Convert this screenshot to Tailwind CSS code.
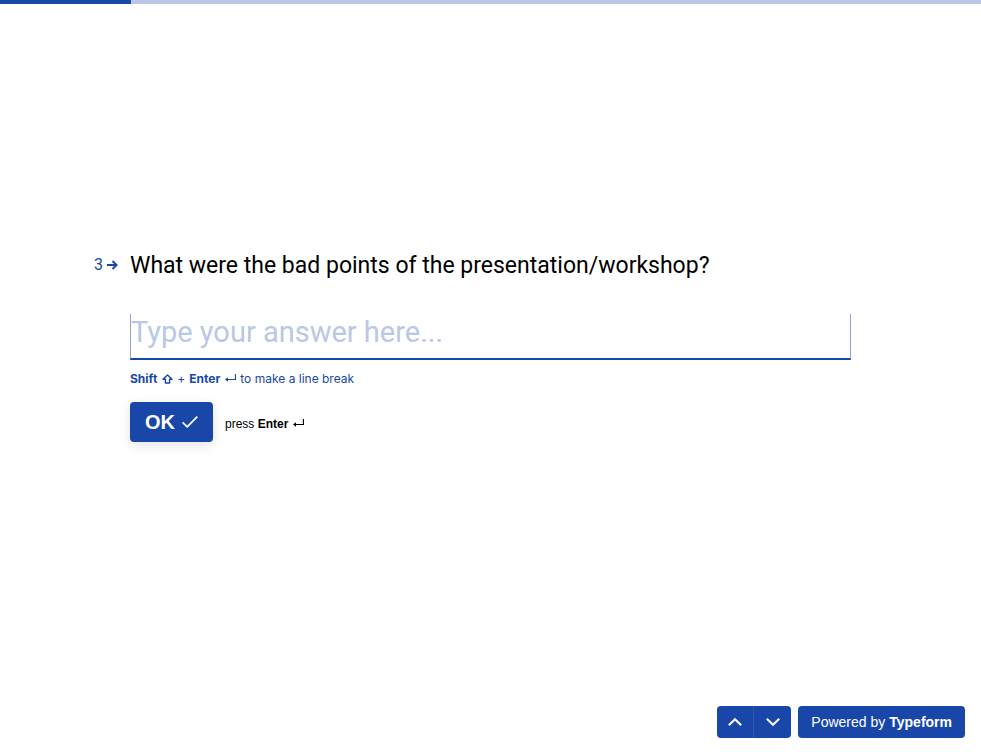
<!DOCTYPE html>
<html lang="en">
<head>
<meta charset="utf-8">
<meta name="viewport" content="width=device-width, initial-scale=1">
<title>Workshop feedback</title>
<script src="https://cdn.jsdelivr.net/npm/@tailwindcss/browser@4"></script>
</head>
<body class="flex min-h-screen flex-col bg-white font-['Inter',sans-serif] text-black">
  <div class="h-1 bg-[#bac7e5]" role="progressbar" aria-label="Progress" aria-valuenow="13" aria-valuemin="0" aria-valuemax="100">
    <div class="h-full bg-[#1847a9]" style="width:13.35%"></div>
  </div>

  <main class="flex flex-1 flex-col justify-center px-10 pb-0.5">
    <form class="mx-auto w-full max-w-[721px]">
      <div class="relative">
        <div class="absolute top-0 right-full mr-3 flex h-[30px] items-center gap-1 text-[#1847a9]">
          <span class="font-['Roboto',sans-serif] text-base">3</span>
          <svg class="h-[10px] w-[11px]" viewBox="0 0 11 10" fill="none" stroke="currentColor" stroke-width="2" aria-hidden="true"><path d="M0 5h9.5M5.5 1l4 4-4 4"/></svg>
        </div>
        <label for="answer" class="block font-['Roboto',sans-serif] text-[23px] leading-8">What were the bad points of the presentation/workshop?</label>
      </div>
      <textarea id="answer" rows="1" placeholder="Type your answer here..." class="mt-8 block h-[46px] w-full resize-none overflow-hidden border-x border-b-2 border-x-[#8ba3d4] border-b-[#1847a9] pb-2 font-['Roboto',sans-serif] text-[29px] leading-9 text-[#1847a9] outline-none placeholder:text-[#bac7e5]"></textarea>
      <p class="mt-2.5 flex items-center gap-1 text-xs leading-[18px] text-[#1847a9]">
        <strong class="font-bold">Shift</strong>
        <svg class="h-[10px] w-3" viewBox="0 0 12 10" fill="none" stroke="currentColor" stroke-width="1.4" stroke-linejoin="round" aria-hidden="true"><path d="M6.5 1L11 5.3H8.6V9H4.4V5.3H2z"/></svg>
        <span>+</span>
        <strong class="font-bold">Enter</strong>
        <svg class="h-[11px] w-3" viewBox="0 0 12 11" fill="none" stroke="currentColor" stroke-width="1.1" aria-hidden="true"><path d="M11.4 0v5.5H2"/><path d="M1 5.5l3-2.3v4.6z" fill="currentColor" stroke="none"/></svg>
        <span>to make a line break</span>
      </p>
      <div class="mt-3.5 flex items-center gap-3 font-['Liberation_Sans',sans-serif]">
        <button type="button" class="flex h-10 items-center gap-[7px] rounded bg-[#1847a9] px-[15px] text-xl font-bold text-white shadow-[0_3px_12px_rgba(0,0,0,0.12)]">
          OK
          <svg class="h-3 w-4" viewBox="0 0 16 12" fill="none" stroke="currentColor" stroke-width="1.8" aria-hidden="true"><path d="M.6 6.4l4.6 4.4L15.3.7"/></svg>
        </button>
        <p class="flex items-center gap-1 pt-1 text-xs">
          <span>press <strong>Enter</strong></span>
          <svg class="h-[11px] w-3" viewBox="0 0 12 11" fill="none" stroke="currentColor" stroke-width="1.1" aria-hidden="true"><path d="M11.4 0v5.5H2"/><path d="M1 5.5l3-2.3v4.6z" fill="currentColor" stroke="none"/></svg>
        </p>
      </div>
    </form>
  </main>

  <footer class="flex justify-end gap-[7px] p-4 font-['Liberation_Sans',sans-serif] text-sm text-white">
    <nav class="flex h-8" aria-label="Questions">
      <button type="button" aria-label="Previous question" class="flex w-[37px] items-center justify-center rounded-l border-r border-[#2f59b1] bg-[#1847a9]">
        <svg class="h-2 w-3.5" viewBox="0 0 14 8" fill="none" stroke="currentColor" stroke-width="2" aria-hidden="true"><path d="M.8 7.2L7 1.2l6.2 6"/></svg>
      </button>
      <button type="button" aria-label="Next question" class="flex w-[37px] items-center justify-center rounded-r bg-[#1847a9]">
        <svg class="h-2 w-3.5" viewBox="0 0 14 8" fill="none" stroke="currentColor" stroke-width="2" aria-hidden="true"><path d="M.8.8L7 6.8l6.2-6"/></svg>
      </button>
    </nav>
    <a href="#" class="flex h-8 items-center gap-1 rounded bg-[#1847a9] px-[13px]"><span>Powered by</span> <strong>Typeform</strong></a>
  </footer>
</body>
</html>
